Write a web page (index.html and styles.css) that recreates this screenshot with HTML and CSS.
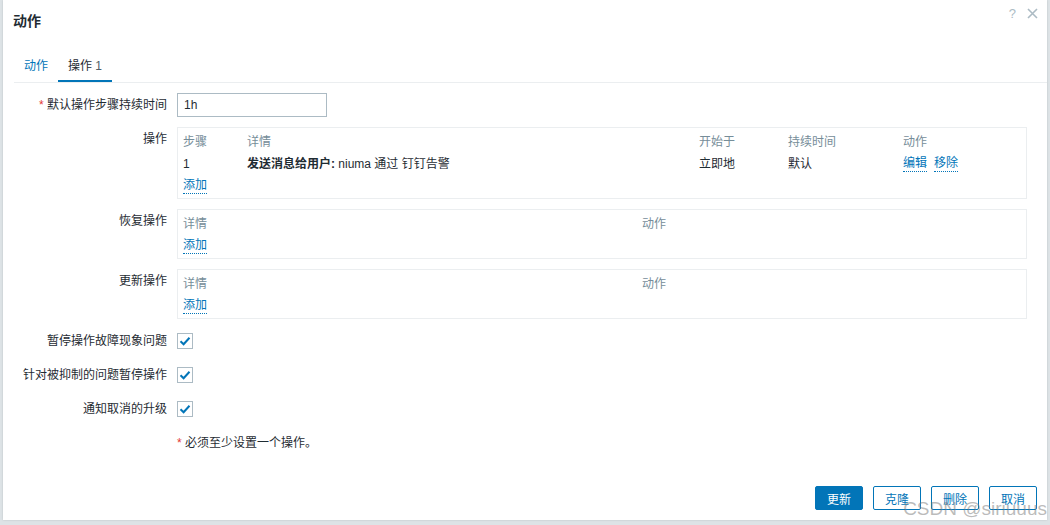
FILE: index.html
```html
<!DOCTYPE html>
<html lang="zh">
<head>
<meta charset="utf-8">
<link rel="stylesheet" href="styles.css">
</head>
<body>
<div class="dialog">
  <div class="dlg-head">
    <h2 class="dlg-title">动作</h2>
    <div class="dlg-tools">
      <span class="help">?</span>
      <svg class="close" width="11" height="11" viewBox="0 0 11 11"><path d="M1 1L10 10M10 1L1 10" stroke="#acbbc4" stroke-width="1.6" fill="none"/></svg>
    </div>
  </div>
  <div class="tabs">
    <span class="tab">动作</span>
    <span class="tab active">操作 <span class="cnt">1</span></span>
  </div>
  <div class="form">
    <div class="lbl"><span class="req">*</span> 默认操作步骤持续时间</div>
    <div class="fld"><div class="input">1h</div></div>

    <div class="lbl">操作</div>
    <div class="fld">
      <div class="box">
        <div class="trow hdr">
          <span class="c1">步骤</span><span class="c2">详情</span><span class="c3">开始于</span><span class="c4">持续时间</span><span class="c5">动作</span>
        </div>
        <div class="trow">
          <span class="c1">1</span><span class="c2"><b>发送消息给用户:</b> niuma 通过 钉钉告警</span><span class="c3">立即地</span><span class="c4">默认</span><span class="c5"><a class="lnk">编辑</a><a class="lnk">移除</a></span>
        </div>
        <div class="trow"><a class="lnk">添加</a></div>
      </div>
    </div>

    <div class="lbl">恢复操作</div>
    <div class="fld">
      <div class="box">
        <div class="trow hdr"><span class="d1">详情</span><span>动作</span></div>
        <div class="trow"><a class="lnk">添加</a></div>
      </div>
    </div>

    <div class="lbl">更新操作</div>
    <div class="fld">
      <div class="box">
        <div class="trow hdr"><span class="d1">详情</span><span>动作</span></div>
        <div class="trow"><a class="lnk">添加</a></div>
      </div>
    </div>

    <div class="lbl">暂停操作故障现象问题</div>
    <div class="fld"><span class="cb"><svg width="12" height="10" viewBox="0 0 12 10"><path d="M1.5 5.2L4.6 8.2L10.5 1.8" stroke="#0275b8" stroke-width="2" fill="none"/></svg></span></div>

    <div class="lbl">针对被抑制的问题暂停操作</div>
    <div class="fld"><span class="cb"><svg width="12" height="10" viewBox="0 0 12 10"><path d="M1.5 5.2L4.6 8.2L10.5 1.8" stroke="#0275b8" stroke-width="2" fill="none"/></svg></span></div>

    <div class="lbl">通知取消的升级</div>
    <div class="fld"><span class="cb"><svg width="12" height="10" viewBox="0 0 12 10"><path d="M1.5 5.2L4.6 8.2L10.5 1.8" stroke="#0275b8" stroke-width="2" fill="none"/></svg></span></div>

    <div class="lbl"></div>
    <div class="fld"><span class="note"><span class="req">*</span> 必须至少设置一个操作。</span></div>
  </div>
  <div class="footer">
    <button class="btn primary">更新</button>
    <button class="btn">克隆</button>
    <button class="btn">删除</button>
    <button class="btn">取消</button>
  </div>
  <div class="watermark">CSDN @siriuuus</div>
</div>
</body>
</html>
```
FILE: styles.css
```css
html, body {
  margin: 0;
  padding: 0;
  width: 1050px;
  height: 525px;
  overflow: hidden;
  background: #dde3e6;
  font-family: "Liberation Sans", Arial, "Noto Sans CJK SC", sans-serif;
  font-size: 12px;
  color: #1f2c33;
}
.dialog {
  position: relative;
  margin-left: 3px;
  width: 1044px;
  height: 520px;
  background: #fff;
  box-shadow: 0 0 2px rgba(0,0,0,0.15);
  display: flex;
  flex-direction: column;
}
.dlg-head {
  height: 40px;
  display: flex;
  align-items: center;
  justify-content: space-between;
  padding: 0 9px 0 10px;
}
.dlg-title {
  margin: 0;
  font-size: 14px;
  font-weight: bold;
  color: #1f2c33;
}
.dlg-tools {
  display: flex;
  align-items: center;
  gap: 11px;
  margin-top: -14px;
}
.help {
  color: #acbbc4;
  font-size: 13px;
}
.tabs {
  margin: 11px 0 0 11px;
  border-bottom: 1px solid #ebeef0;
  display: flex;
}
.tab {
  padding: 2px 10px 0;
  line-height: 27px;
  border-bottom: 2px solid transparent;
  color: #0275b8;
}
.tab.active {
  color: #1f2c33;
  border-bottom-color: #0275b8;
}
.tab .cnt {
  color: #4f5f6a;
}
.form {
  display: grid;
  grid-template-columns: 154px 850px;
  column-gap: 10px;
  row-gap: 10px;
  padding: 10px 0 0 10px;
}
.lbl {
  text-align: right;
  line-height: 24px;
  white-space: nowrap;
}
.req {
  color: #e33734;
}
.fld {
  min-height: 24px;
  display: flex;
  align-items: flex-start;
}
.input {
  box-sizing: border-box;
  width: 150px;
  height: 24px;
  border: 1px solid #acbbc4;
  padding: 0 6px;
  line-height: 22px;
}
.box {
  box-sizing: border-box;
  width: 850px;
  border: 1px solid #ebeef0;
  padding: 3px 5px 1px;
}
.trow {
  display: flex;
  align-items: center;
  height: 22px;
  line-height: 22px;
  white-space: nowrap;
}
.hdr {
  color: #768d99;
}
.c1 { width: 64px; }
.c2 { width: 452px; }
.c3 { width: 89px; }
.c4 { width: 115px; }
.d1 { width: 459px; }
.c5 { display: flex; align-items: center; }
.c2 b { font-weight: bold; }
.lnk {
  color: #0275b8;
  text-decoration: none;
  border-bottom: 1px dotted #0275b8;
  line-height: 15px;
  margin-right: 7px;
}
.cb {
  box-sizing: border-box;
  width: 16px;
  height: 16px;
  margin-top: 4px;
  border: 1px solid #acbbc4;
  display: flex;
  align-items: center;
  justify-content: center;
}
.note {
  line-height: 24px;
}
.footer {
  margin-top: auto;
  display: flex;
  justify-content: flex-end;
  gap: 10px;
  padding: 0 10px 10px 0;
}
.btn {
  box-sizing: border-box;
  width: 48px;
  height: 24px;
  border: 1px solid #0275b8;
  border-radius: 2px;
  background: #fff;
  color: #0275b8;
  font-family: "Liberation Sans", Arial, "Noto Sans CJK SC", sans-serif;
  font-size: 12px;
  padding: 0;
}
.btn.primary {
  background: #0275b8;
  color: #fff;
}
.watermark {
  position: absolute;
  right: 0;
  bottom: 0;
  font-size: 19px;
  line-height: 22px;
  color: rgba(120,120,120,0.5);
}
```
